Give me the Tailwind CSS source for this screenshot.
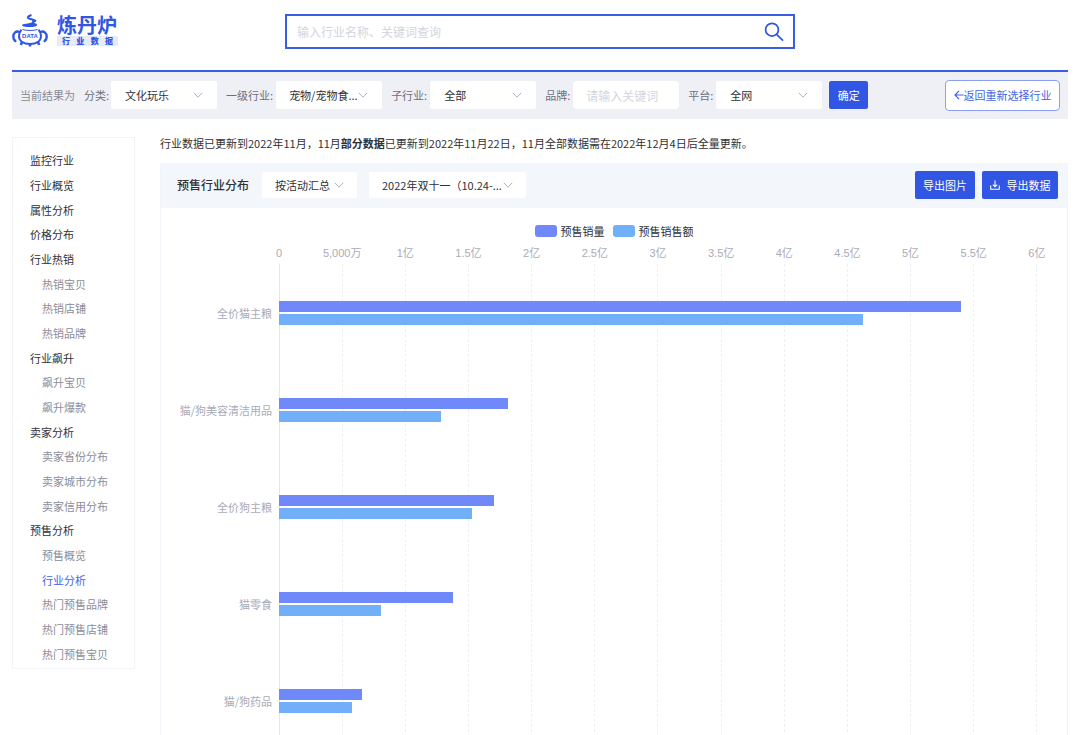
<!DOCTYPE html>
<html lang="zh-CN">
<head>
<meta charset="utf-8">
<meta name="viewport" content="width=device-width, initial-scale=1">
<title>炼丹炉 行业数据</title>
<script src="https://cdn.jsdelivr.net/npm/@tailwindcss/browser@4"></script>
</head>
<body class="h-screen overflow-hidden bg-white px-3 font-['Noto_Sans_CJK_SC',sans-serif] text-[11px] leading-4 text-[#303136]">

<svg class="hidden" aria-hidden="true">
  <symbol id="chevron" viewBox="0 0 10 10"><path d="M0.8 2.8 L5 7.2 L9.2 2.8" fill="none" stroke="#aeb1bd" stroke-width="1"/></symbol>
</svg>

<header class="grid h-[70px] grid-cols-[273px_510px_1fr] items-start">
  <a href="#" class="flex gap-[9px] pt-[14px]" aria-label="炼丹炉 行业数据">
    <svg class="h-[33px] w-9 shrink-0" viewBox="0 0 36 33" fill="none">
      <path d="M19.500 1 C14.500 2.800 15 4.200 18.500 5 C22 5.800 23.500 6.500 20.500 8.500" stroke="#3056e3" stroke-width="2"/>
      <path d="M20 5.500 C25.500 5 26 7 21.500 8.800 L24.500 9.800 C26 11 25 12.300 22 12.800 C19 13.300 15 13.200 12 12.600 C9.500 12 9.500 10.500 12 10 C15 9.500 19 9.300 20.500 8Z" fill="#3056e3"/>
      <path d="M9.500 15.800 C7.700 17.500 7 19.500 7 22 C7 27 11.500 30 18 30 C24.500 30 29 27 29 22 C29 19.500 28.300 17.500 26.500 15.800" stroke="#3056e3" stroke-width="2"/>
      <path d="M10.500 15.500 C14 16.800 22 16.800 25.500 15.500" stroke="#3056e3" stroke-width="1"/>
      <path d="M7.500 18 C4 16.500 1.500 19 1.300 22.500 C1.200 24.500 2 26 3.300 27 M28.500 18 C32 16.500 34.500 19 34.700 22.500 C34.800 24.500 34 26 32.700 27" stroke="#3056e3" stroke-width="2.400" stroke-linecap="round"/>
      <path d="M10 27.500 L9 31 M26 27.500 L27 31 M18 30 V32.500" stroke="#3056e3" stroke-width="2.600"/>
      <text x="18" y="23.500" text-anchor="middle" font-family="Liberation Sans, sans-serif" font-weight="700" font-size="6" fill="#3056e3">DATA</text>
    </svg>
    <span class="flex w-[61px] flex-col pt-[2px] font-['Liberation_Sans','Noto_Sans_CJK_SC',sans-serif] text-[#3056e3]">
      <span class="text-[20px] leading-[20px] font-bold">炼丹炉</span>
      <span class="flex h-[10px] justify-between bg-[#e7eaf7] px-[5px] text-[8px] leading-[12px] font-black"><span>行</span><span>业</span><span>数</span><span>据</span></span>
    </span>
  </a>
  <form class="mt-[14px] flex h-[35px] items-center border-2 border-[#3a5ce6]">
    <input type="search" aria-label="搜索" placeholder="输入行业名称、关键词查询" class="h-full min-w-0 flex-1 pl-[10px] text-[12px] outline-none placeholder:text-[#d3d5dc]">
    <button type="button" aria-label="搜索" class="mr-[9px]">
      <svg class="size-5" viewBox="0 0 20 20" fill="none" stroke="#3056e3" stroke-width="1.700"><circle cx="8" cy="7.700" r="6.400"/><path d="M12.600 12.300 L19 18.700"/></svg>
    </button>
  </form>
</header>

<form class="flex h-[49px] items-center gap-[9px] border-t-2 border-[#3a5ce6] bg-[#eff0f6] pr-2 pb-px pl-2 whitespace-nowrap text-[#6d6f7b]">
  <span class="text-[#888a95]">当前结果为</span>
  <label class="flex items-center gap-[2px]">分类:
    <span class="relative"><select class="h-7 w-[106px] appearance-none rounded-xs bg-white pl-[14px] text-[#303136]"><option>文化玩乐</option></select>
    <svg class="pointer-events-none absolute top-[9px] right-[14px] size-[10px]"><use href="#chevron"/></svg></span>
  </label>
  <label class="flex items-center gap-[3px]">一级行业:
    <span class="relative"><select class="h-7 w-[106px] appearance-none rounded-xs bg-white pl-[13px] text-[#303136]"><option>宠物/宠物食...</option></select>
    <svg class="pointer-events-none absolute top-[9px] right-[14px] size-[10px]"><use href="#chevron"/></svg></span>
  </label>
  <label class="flex items-center gap-[3px]">子行业:
    <span class="relative"><select class="h-7 w-[106px] appearance-none rounded-xs bg-white pl-[14px] text-[#303136]"><option>全部</option></select>
    <svg class="pointer-events-none absolute top-[9px] right-[14px] size-[10px]"><use href="#chevron"/></svg></span>
  </label>
  <label class="flex items-center gap-[3px]">品牌:
    <input type="text" placeholder="请输入关键词" class="h-7 w-[106px] rounded-sm bg-white pl-[13px] text-[12px] outline-none placeholder:text-[#d3d5dc]">
  </label>
  <label class="flex items-center gap-[3px]">平台:
    <span class="relative"><select class="h-7 w-[106px] appearance-none rounded-xs bg-white pl-[14px] text-[#303136]"><option>全网</option></select>
    <svg class="pointer-events-none absolute top-[9px] right-[14px] size-[10px]"><use href="#chevron"/></svg></span>
  </label>
  <button type="button" class="-ml-[2px] h-7 w-[39px] rounded-xs bg-[#3056e3] text-white">确定</button>
  <button type="button" class="ml-auto flex h-[31px] w-[115px] items-center justify-center rounded-sm border border-[#8c9ff0] bg-white text-[#4465e6]">
    <svg class="size-[10px]" viewBox="0 0 10 10" fill="none" stroke="#3f60e5" stroke-width="1.200"><path d="M9.500 5 H1.200 M5 0.900 L1 5 L5 9.100"/></svg>返回重新选择行业
  </button>
</form>

<div class="flex items-start gap-[25px]">
  <nav class="mt-[18px] w-[123px] shrink-0 border border-[#f3f4f9] pt-[10px] pb-[2px] pl-[17px]">
    <ul class="grid min-h-[518px] auto-rows-fr items-center text-[#303136] [&_.sub]:pl-3 [&_.sub]:text-[#8b8d99]">
      <li><a href="#">监控行业</a></li>
      <li><a href="#">行业概览</a></li>
      <li><a href="#">属性分析</a></li>
      <li><a href="#">价格分布</a></li>
      <li><a href="#">行业热销</a></li>
      <li class="sub"><a href="#">热销宝贝</a></li>
      <li class="sub"><a href="#">热销店铺</a></li>
      <li class="sub"><a href="#">热销品牌</a></li>
      <li><a href="#">行业飙升</a></li>
      <li class="sub"><a href="#">飙升宝贝</a></li>
      <li class="sub"><a href="#">飙升爆款</a></li>
      <li><a href="#">卖家分析</a></li>
      <li class="sub"><a href="#">卖家省份分布</a></li>
      <li class="sub"><a href="#">卖家城市分布</a></li>
      <li class="sub"><a href="#">卖家信用分布</a></li>
      <li><a href="#">预售分析</a></li>
      <li class="sub"><a href="#">预售概览</a></li>
      <li class="sub"><a href="#" aria-current="page" class="text-[#4465e6]">行业分析</a></li>
      <li class="sub"><a href="#">热门预售品牌</a></li>
      <li class="sub"><a href="#">热门预售店铺</a></li>
      <li class="sub"><a href="#">热门预售宝贝</a></li>
    </ul>
  </nav>

  <main class="min-w-0 flex-1">
    <p class="mt-4 whitespace-nowrap">行业数据已更新到2022年11月，11月<b>部分数据</b>已更新到2022年11月22日，11月全部数据需在2022年12月4日后全量更新。</p>
    <section class="mt-3 border border-t-0 border-[#f3f4f9]">
      <div class="flex h-[45px] items-center bg-[#f3f6fb] pr-[9px] pb-[2px] pl-4">
        <h1 class="mr-[13px] text-[12px] font-medium">预售行业分布</h1>
        <span class="relative mr-3"><select aria-label="汇总方式" class="h-[26px] w-[95px] appearance-none rounded-xs bg-white pl-[13px]"><option>按活动汇总</option></select>
        <svg class="pointer-events-none absolute top-2 right-[13px] size-[10px]"><use href="#chevron"/></svg></span>
        <span class="relative"><select aria-label="活动" class="h-[26px] w-[157px] appearance-none rounded-xs bg-white pl-[13px]"><option>2022年双十一（10.24-...</option></select>
        <svg class="pointer-events-none absolute top-2 right-[13px] size-[10px]"><use href="#chevron"/></svg></span>
        <button type="button" class="ml-auto h-7 w-[60px] rounded-xs bg-[#3056e3] text-white">导出图片</button>
        <button type="button" class="ml-[7px] flex h-7 w-[76px] items-center justify-center gap-[7px] rounded-xs bg-[#3056e3] text-white">
          <svg class="size-[10px]" viewBox="0 0 10 10" fill="none" stroke="#fff" stroke-width="1.100"><path d="M0.700 5.500 V9.300 H9.300 V5.500 M5 0.500 V6.500 M2.800 4.600 L5 6.800 L7.200 4.600"/></svg>导出数据
        </button>
      </div>

      <div class="flex justify-center gap-2 pt-[15px]">
        <span class="flex items-center gap-1"><i class="h-3 w-[22px] rounded-[3px] bg-[#6f89fa]"></i>预售销量</span>
        <span class="flex items-center gap-1"><i class="h-3 w-[22px] rounded-[3px] bg-[#71b0f9]"></i>预售销售额</span>
      </div>

      <div class="grid grid-cols-[118px_1fr] pt-[6px] pr-[30px] text-[#a9abb8]">
        <div class="col-start-2 flex h-[19px] justify-between font-['Liberation_Sans','Noto_Sans_CJK_SC',sans-serif] whitespace-nowrap" id="ticks"></div>
        <div class="col-start-1 text-right" id="names"></div>
        <div class="relative col-start-2">
          <div class="absolute inset-0 flex justify-between" id="lines"></div>
          <div class="relative" id="bars"></div>
        </div>
      </div>
    </section>
  </main>
</div>

<script>
  const ticks = ['0', '5,000万', '1亿', '1.5亿', '2亿', '2.5亿', '3亿', '3.5亿', '4亿', '4.5亿', '5亿', '5.5亿', '6亿'];
  // name, pre-sale volume, pre-sale revenue (percent of the 6亿 axis)
  const rows = [
    ['全价猫主粮', 90, 77],
    ['猫/狗美容清洁用品', 30.2, 21.4],
    ['全价狗主粮', 28.4, 25.4],
    ['猫零食', 23, 13.4],
    ['猫/狗药品', 10.9, 9.6],
  ];
  const put = (id, html) => { document.getElementById(id).innerHTML = html; };
  put('ticks', ticks.map(t => `<span class="flex w-0 justify-center">${t}</span>`).join(''));
  put('lines', ticks.map((t, i) => i === 0
    ? '<i class="w-px bg-[#e3e5f0]"></i>'
    : '<i class="w-px bg-[repeating-linear-gradient(#eeeff7_0_3px,transparent_3px_5px)]"></i>').join(''));
  put('names', rows.map(r => `<div class="flex h-[97px] items-center justify-end pr-[7px]">${r[0]}</div>`).join(''));
  put('bars', rows.map(r => `<div class="flex h-[97px] flex-col justify-center gap-[2px]">
    <div class="h-[11px] bg-[#6f89fa]" style="width:${r[1]}%"></div>
    <div class="h-[11px] bg-[#71b0f9]" style="width:${r[2]}%"></div></div>`).join(''));
</script>
</body>
</html>
